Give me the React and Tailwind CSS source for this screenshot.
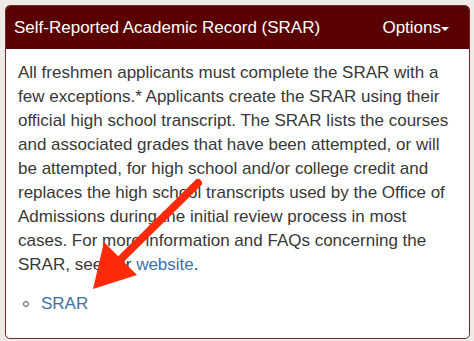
export default function App() {
  return (
    <div className="min-h-[341px] w-[474px] bg-[#eeebe7] pt-[5px] pl-[5px] pr-[4px] pb-[2px] font-['Liberation_Sans',Arial,sans-serif]">
      <div className="relative overflow-hidden rounded-[5px] border border-[#6e2b2b] bg-white">
        {/* Panel heading */}
        <div className="flex h-[43px] items-center justify-between bg-[#5a0202] pl-[8px] pr-[20px] text-[17px] text-white">
          <span>Self-Reported Academic Record (SRAR)</span>
          <span className="flex items-center">
            Options
            <span className="mt-[3px] h-0 w-0 border-x-[4px] border-t-[4px] border-x-transparent border-t-white" />
          </span>
        </div>

        {/* Panel body */}
        <div className="px-[12px] pt-[12px] pb-[22px] text-[17px] leading-[24px] text-[#383838]">
          <p>
            All freshmen applicants must complete the SRAR with a few exceptions.* Applicants create the SRAR using
            their official high school transcript. The SRAR lists the courses and associated grades that have been
            attempted, or will be attempted, for high school and/or college credit and replaces the high school
            transcripts used by the Office of Admissions during the initial review process in most cases. For more
            information and FAQs concerning the SRAR, see our{' '}
            <a className="text-[#3d72a8]">website</a>.
          </p>
          <ul className="mt-[15px]">
            <li className="flex items-center">
              <span className="ml-[5px] mr-[12px] h-[6px] w-[6px] rounded-full border border-[#555]" />
              <a className="text-[#3d72a8]">SRAR</a>
            </li>
          </ul>
        </div>

        {/* Red annotation arrow */}
        <svg className="pointer-events-none absolute left-[-6px] top-[-6px]" width="474" height="341">
          <line x1="198" y1="183" x2="122" y2="258" stroke="#ff2a0a" strokeWidth="8" strokeLinecap="round" />
          <polygon points="93,289 104,242 137,275" fill="#ff2a0a" />
        </svg>
      </div>
    </div>
  );
}
